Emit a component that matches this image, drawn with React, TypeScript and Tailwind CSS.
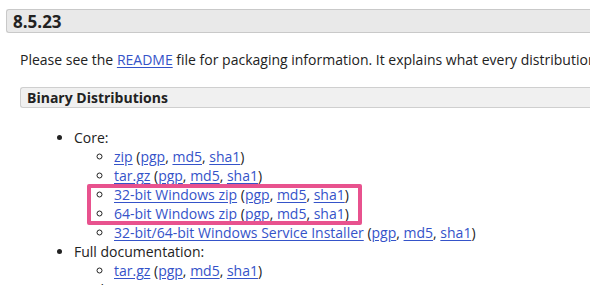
const font = { fontFamily: '"Open Sans", "Liberation Sans", sans-serif' };

function L({ children }: { children: React.ReactNode }) {
  return <a href="#" className="text-[#3553c9] underline underline-offset-2">{children}</a>;
}

function Sigs() {
  return (
    <>
      {" "}(<L>pgp</L>, <L>md5</L>, <L>sha1</L>)
    </>
  );
}

export default function App() {
  return (
    <div className="w-[590px] h-[285px] overflow-hidden bg-white text-[#222] relative" style={font}>
      <div className="pt-[9px] pl-[6px]">
        <div className="h-[24px] bg-[#e9e9e9] border border-r-0 border-[#c9c9c9] rounded-l-[3px] pl-[6px] flex items-center">
          <span className="text-[17px] font-bold leading-none">8.5.23</span>
        </div>
      </div>

      <div className="pl-[20px]">
        <p className="mt-[17px] text-[14px] leading-[20px] whitespace-nowrap">
          Please see the <L>README</L> file for packaging information. It explains what every distribution contains.
        </p>

        <div className="mt-[17px] h-[21px] bg-[#f0f0f0] border border-r-0 border-[#cfcfcf] rounded-l-[3px] pl-[6px] flex items-center">
          <span className="text-[14px] font-bold leading-none">Binary Distributions</span>
        </div>

        <ul className="mt-[20px] pl-[54px] list-disc text-[14px] leading-[19px] whitespace-nowrap">
          <li>
            Core:
            <ul className="pl-[40px] list-[circle]">
              <li><L>zip</L><Sigs /></li>
              <li><L>tar.gz</L><Sigs /></li>
              <li><L>32-bit Windows zip</L><Sigs /></li>
              <li><L>64-bit Windows zip</L><Sigs /></li>
              <li><L>32-bit/64-bit Windows Service Installer</L><Sigs /></li>
            </ul>
          </li>
          <li>
            Full documentation:
            <ul className="pl-[40px] list-[circle]">
              <li><L>tar.gz</L><Sigs /></li>
            </ul>
          </li>
          <li>Deployer:</li>
        </ul>
      </div>

      <div className="absolute left-[87px] top-[184px] w-[275px] h-[41px] border-[4px] border-[#e8528e] rounded-[2px] pointer-events-none" />
    </div>
  );
}
